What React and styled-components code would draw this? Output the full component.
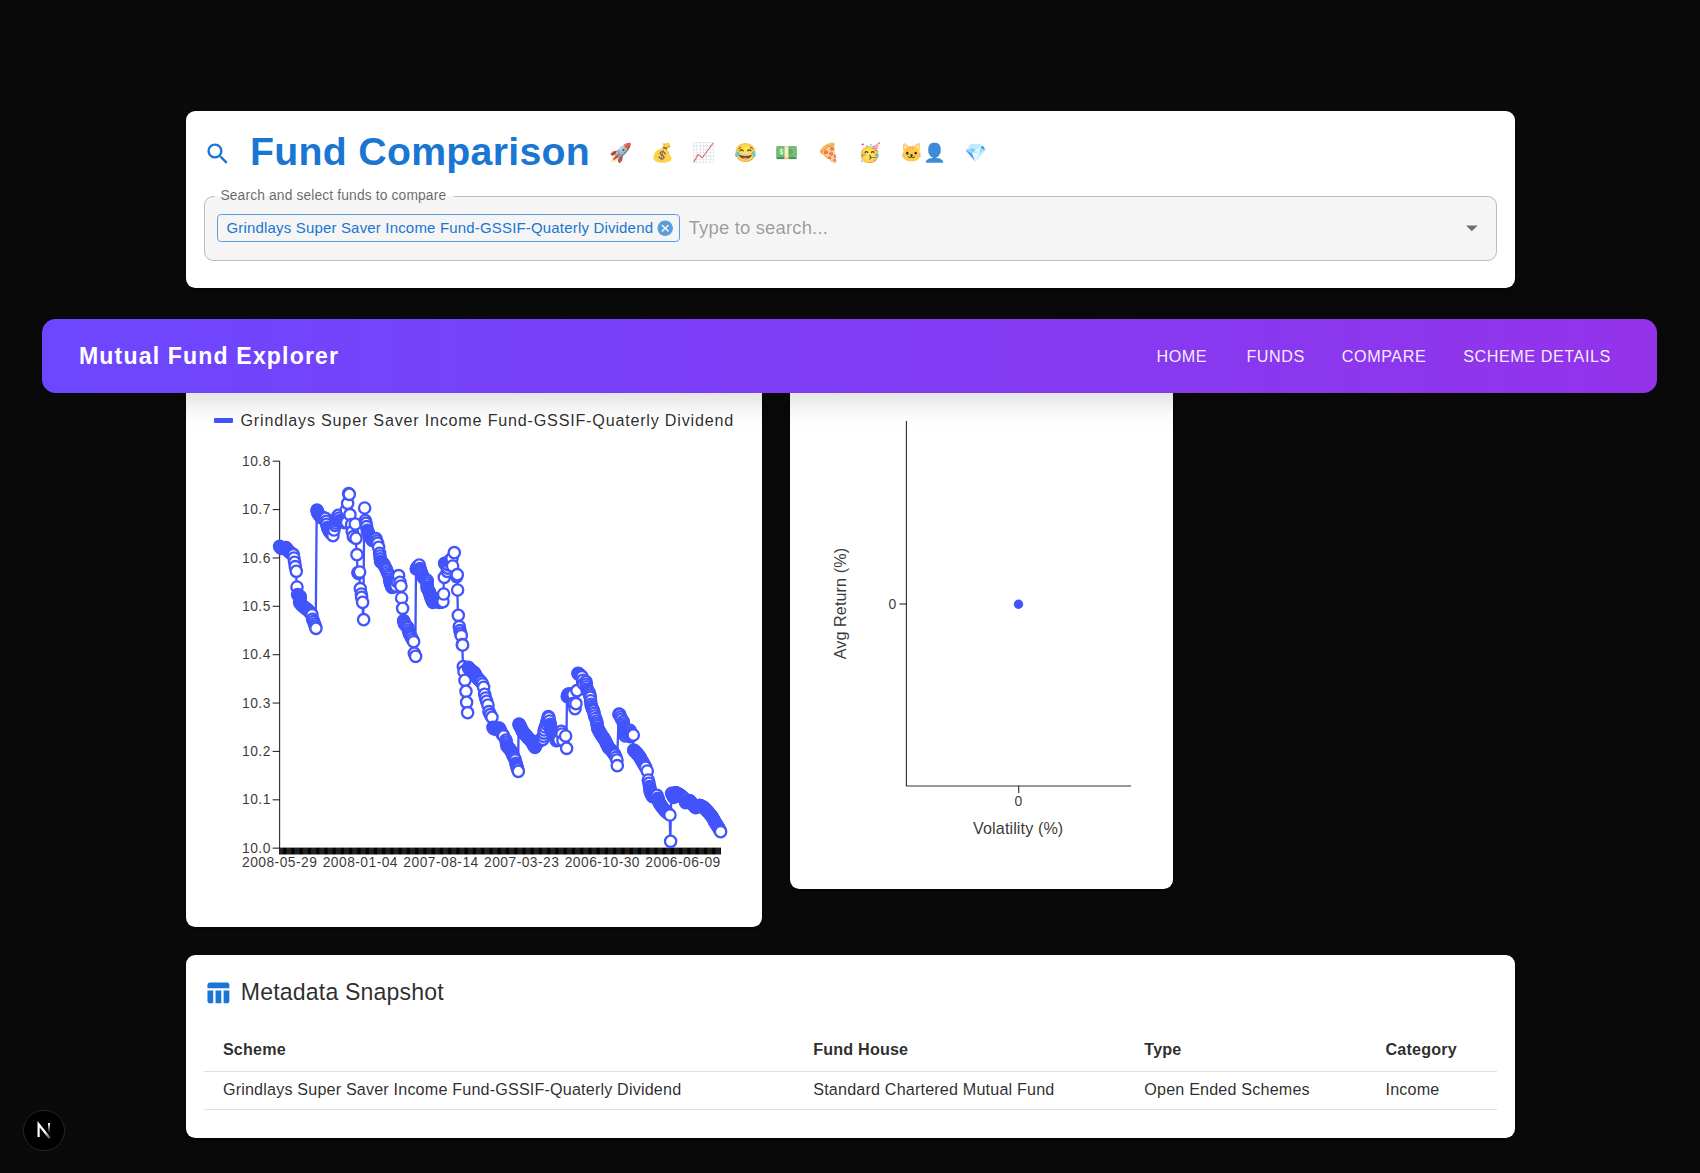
import React from "react";
import styled, { createGlobalStyle } from "styled-components";

const GlobalStyle = createGlobalStyle`
  *, *::before, *::after { box-sizing: border-box; }
  html { font-size: 18.466px; }
  body {
    margin: 0;
    background: #0a0a0a;
    color: rgba(0, 0, 0, 0.84);
    font-family: "Liberation Sans", Arial, Helvetica, sans-serif;
    overflow: hidden;
  }
`;

const Page = styled.div`
  position: relative;
  height: 1173px;
`;

const Content = styled.main`
  width: 1330px;
  margin: 0 auto;
  padding: 6rem 0 0 1px;
`;

const Card = styled.section`
  background: #fff;
  border-radius: 0.5rem;
  box-shadow: 0 2px 5px rgba(0, 0, 0, 0.6);
`;

const PaddedCard = styled(Card)`
  padding: 1rem 1rem 1.5rem;
`;

const TitleRow = styled.div`
  display: flex;
  align-items: center;
  gap: ${(p) => p.$gap};
  margin-bottom: 1rem;
`;

const Icon = styled.svg`
  flex: none;
  width: ${(p) => p.$size || "1.5rem"};
  height: ${(p) => p.$size || "1.5rem"};
  fill: ${(p) => p.$color || "#1976d2"};
`;

const PageTitle = styled.h1`
  margin: 0;
  padding-bottom: 3px;
  font-size: 2.125rem;
  line-height: calc(2.624rem - 3px);
  font-weight: 700;
  letter-spacing: 0.00735em;
  color: #1976d2;
`;

const SectionTitle = styled.h2`
  margin: 0;
  font-size: 1.25rem;
  line-height: 1.6;
  font-weight: 400;
  letter-spacing: 0.0075em;
`;

const EmojiStrip = styled.div`
  display: flex;
  gap: 1rem;
  padding: 0 0 1px 1.5px;
  font-size: 1rem;
  line-height: 1.5;
`;

const Field = styled.div`
  position: relative;
  display: flex;
  align-items: center;
  height: 3.5rem;
  padding: 0 0.5625rem 1px 0.7rem;
  border-radius: 0.5rem;
  background: #f5f5f5;
`;

const FieldOutline = styled.fieldset`
  position: absolute;
  inset: -5px 0 0;
  margin: 0;
  padding: 0 0.5rem;
  border: 1px solid rgba(0, 0, 0, 0.23);
  border-radius: 0.5rem;
  pointer-events: none;

  legend {
    height: 11px;
    padding: 0 0.4rem 0 0.3125rem;
    font-size: 0.75rem;
    letter-spacing: 0.00938em;
    line-height: 8px;
    color: rgba(0, 0, 0, 0.6);
    white-space: nowrap;
  }
`;

const Chip = styled.span`
  display: flex;
  align-items: center;
  height: 1.5rem;
  padding: 0 0.25rem 0 0.4375rem;
  gap: 0.17rem;
  border: 1px solid rgba(25, 118, 210, 0.7);
  border-radius: 0.25rem;
  color: #1976d2;
  font-size: 0.8125rem;
  letter-spacing: 0.01154em;
  white-space: nowrap;
`;

const Placeholder = styled.span`
  flex: 1;
  margin-left: 0.45rem;
  font-size: 1rem;
  letter-spacing: 0.00938em;
  color: rgba(0, 0, 0, 0.38);
`;

const NavBar = styled.nav`
  position: absolute;
  top: 319.3px;
  left: 42px;
  right: 43px;
  height: 74px;
  display: flex;
  align-items: center;
  justify-content: space-between;
  padding: 0 2rem;
  border-radius: 0.75rem;
  background: linear-gradient(90deg, #6c47ff, #9333ea);
  box-shadow: 0 4px 32px rgba(0, 0, 0, 0.18);
  color: #fff;
`;

const Brand = styled.span`
  font-size: 1.25rem;
  font-weight: 700;
  letter-spacing: 0.0625rem;
`;

const NavLinks = styled.div`
  display: flex;
  gap: 1rem;
`;

const NavLink = styled.a`
  min-width: 4rem;
  padding: 0.375rem 0.5rem;
  text-align: center;
  text-transform: uppercase;
  font-size: 0.875rem;
  letter-spacing: 0.03125rem;
  line-height: 1.75;
  color: rgba(255, 255, 255, 0.93);
`;

const ChartRow = styled.div`
  display: flex;
  align-items: flex-start;
  gap: 28px;
  margin: 46px 0 28px;
`;

const ChartCard = styled(Card)`
  width: ${(p) => p.$width}px;
  height: ${(p) => p.$height}px;
`;

const Legend = styled.div`
  display: flex;
  align-items: center;
  gap: 8px;
  height: 96px;
  padding: 76px 0 0 27.5px;
  font-size: 0.875rem;
  letter-spacing: 0.0427rem;
  white-space: nowrap;
`;

const LegendMark = styled.span`
  width: 19px;
  height: 4.6px;
  border-radius: 1px;
  background: #4254fb;
`;

const Plot = styled.svg`
  display: block;

  text {
    fill: rgba(0, 0, 0, 0.8);
    font-size: 13.85px;
    letter-spacing: 0.46px;
  }
  .label {
    font-size: 16.16px;
    letter-spacing: 0.1px;
  }
  line, .axis {
    stroke: rgba(0, 0, 0, 0.8);
    stroke-width: 1.15;
    fill: none;
  }
`;

const Table = styled.table`
  width: 100%;
  border-collapse: collapse;
  table-layout: fixed;
  font-size: 0.875rem;
  letter-spacing: 0.01071em;
  text-align: left;

  th, td {
    padding: 0.3rem 1rem 0.42rem;
    border-bottom: 1px solid #e0e0e0;
    white-space: nowrap;
  }
  th {
    height: 2.3125rem;
    font-weight: 700;
  }
  td {
    height: 2.05rem;
  }
`;

const DevBadge = styled.div`
  position: absolute;
  left: 23px;
  top: 1109.5px;
  width: 41.5px;
  height: 41.5px;
  border-radius: 50%;
  border: 1.5px solid #262626;
  background: #000;
  display: grid;
  place-items: center;
`;

/* Each run is traced in thirds of a pixel from its own origin: [x, y, points filled in on the way]. */
const RUNS = [
  {
    origin: [265, 450],
    points: [
      [43, 289, 0], [48, 295, 2], [62, 293, 5], [72, 306, 3], [84, 314, 4], [86, 324, 0], [88, 337, 0], [90, 350, 0], [93, 364, 0],
      [95, 411, 0], [97, 434, 0], [105, 440, 2], [103, 458, 2], [112, 468, 3], [128, 480, 5], [140, 494, 4], [142, 508, 0], [148, 522, 1], [152, 535, 1],
      [155, 180, 0], [158, 190, 2], [168, 203, 3], [180, 205, 3], [183, 214, 0], [184, 223, 0], [187, 232, 0], [192, 244, 3], [203, 257, 2],
      [206, 240, 0], [209, 226, 0], [212, 212, 1], [219, 196, 2], [224, 212, 1], [238, 218, 3], [243, 180, 0], [247, 160, 0], [250, 131, 0], [252, 133, 0],
      [244, 217, 0], [254, 194, 0], [259, 224, 0], [261, 245, 0], [264, 260, 0], [270, 222, 0], [272, 265, 0], [275, 314, 0],
      [278, 368, 0], [279, 370, 0], [283, 366, 0], [285, 416, 0], [288, 432, 0], [289, 442, 0], [292, 457, 0], [295, 509, 0],
      [298, 174, 0], [300, 212, 0], [302, 220, 0], [304, 230, 0], [306, 241, 0], [312, 256, 3], [322, 272, 4], [332, 266, 4], [337, 280, 1], [340, 292, 0], [343, 310, 0],
      [346, 335, 2], [355, 342, 3], [364, 360, 3], [372, 380, 2], [374, 395, 1], [380, 412, 3], [392, 408, 3], [396, 395, 0], [400, 377, 0],
      [404, 397, 0], [407, 408, 0], [409, 444, 0], [412, 475, 0], [415, 512, 0], [418, 522, 2], [428, 533, 2], [431, 548, 1], [438, 562, 2], [445, 575, 1],
      [447, 610, 0], [451, 619, 0], [453, 357, 0], [456, 352, 2], [462, 345, 2], [464, 356, 0], [468, 368, 1], [475, 384, 2], [486, 392, 2], [485, 412, 2],
      [493, 428, 3], [496, 440, 2], [503, 457, 3], [511, 445, 2], [522, 457, 3], [533, 455, 2], [535, 432, 0], [537, 382, 0], [538, 340, 0], [543, 344, 2],
      [546, 364, 0], [551, 335, 2], [560, 325, 2], [567, 308, 0], [562, 348, 0], [574, 380, 0], [576, 374, 0], [577, 420, 0], [579, 496, 0],
      [582, 530, 0], [584, 542, 0], [586, 550, 0], [588, 557, 0], [591, 584, 0], [592, 585, 0],
    ],
  },
  {
    origin: [400, 530],
    points: [
      [189, 410, 0], [191, 425, 0], [194, 451, 0], [197, 484, 0], [199, 517, 0], [202, 548, 0],
      [204, 412, 0], [210, 420, 3], [222, 428, 4], [230, 443, 4], [243, 456, 3], [247, 462, 0], [250, 472, 0], [253, 493, 0], [256, 504, 0], [259, 514, 0], [263, 525, 0],
      [266, 545, 0], [270, 554, 0], [275, 562, 0], [278, 592, 0], [283, 597, 3], [297, 594, 4], [303, 608, 3], [310, 618, 2], [317, 630, 0],
      [320, 648, 2], [332, 662, 4], [340, 680, 3], [345, 690, 1], [347, 700, 0], [352, 717, 3], [354, 724, 0],
      [356, 582, 0], [360, 590, 3], [368, 606, 4], [382, 622, 5], [394, 635, 4], [404, 652, 3], [412, 634, 3], [428, 628, 3], [432, 600, 2], [438, 582, 1], [444, 560, 2],
      [446, 563, 0], [448, 573, 0], [450, 583, 0], [452, 600, 3], [464, 618, 4], [468, 632, 2], [476, 630, 2], [483, 604, 0], [485, 612, 0], [488, 632, 0], [496, 618, 0], [499, 655, 0],
      [501, 500, 0], [504, 492, 3], [518, 494, 3], [520, 520, 0], [524, 536, 0], [527, 521, 0],
    ],
  },
  {
    origin: [560, 640],
    points: [
      [50, 152, 0], [53, 100, 0], [57, 103, 3], [65, 110, 2], [70, 132, 1], [77, 125, 0], [80, 148, 2], [87, 160, 3], [90, 172, 1],
      [92, 193, 1], [96, 206, 1], [100, 213, 1], [103, 228, 1], [109, 243, 1], [112, 264, 2], [122, 283, 5], [134, 300, 5], [144, 322, 4], [156, 334, 4], [164, 345, 3], [170, 360, 1], [171, 377, 0],
      [176, 222, 0], [178, 224, 1], [184, 238, 1], [189, 245, 0], [191, 260, 1], [195, 288, 4], [203, 272, 2], [209, 271, 1], [210, 290, 2], [219, 285, 1],
      [220, 330, 0], [228, 338, 4], [238, 350, 5], [248, 368, 4], [256, 382, 2], [261, 393, 0], [264, 420, 0], [266, 430, 0], [268, 440, 0], [270, 455, 2], [277, 470, 3],
      [290, 466, 3], [293, 475, 0], [296, 487, 2], [306, 502, 4], [318, 516, 4], [329, 525, 2], [331, 604, 0],
      [334, 460, 0], [340, 472, 1], [346, 458, 4], [360, 465, 5], [374, 478, 4], [376, 488, 1], [388, 482, 3], [396, 492, 3], [406, 503, 3], [418, 496, 4],
      [430, 502, 4], [442, 514, 4], [455, 530, 4], [466, 549, 5], [474, 562, 3], [481, 575, 2],
    ],
  },
];

function expand(runs) {
  const out = [];
  runs.forEach(({ origin, points }) => {
    points.forEach(([px, py, fill]) => {
      const x = origin[0] + px / 3;
      const y = origin[1] + py / 3;
      const prev = out[out.length - 1];
      for (let i = 1; prev && i <= fill; i += 1) {
        const t = i / (fill + 1);
        out.push([prev[0] + (x - prev[0]) * t, prev[1] + (y - prev[1]) * t]);
      }
      out.push([x, y]);
    });
  });
  return out;
}

const NAV_POINTS = expand(RUNS);
const Y_TICKS = ["10.8", "10.7", "10.6", "10.5", "10.4", "10.3", "10.2", "10.1", "10.0"];
const X_TICKS = ["2008-05-29", "2008-01-04", "2007-08-14", "2007-03-23", "2006-10-30", "2006-06-09"];

function NavHistoryPlot() {
  return (
    <Plot width="575.6" height="497" viewBox="186 430 575.6 497">
      <defs>
        <pattern id="ticks" x="279" y="0" width="8.25" height="10" patternUnits="userSpaceOnUse">
          <rect width="8.25" height="10" fill="#222" />
          <rect x="4" width="3.4" height="10" fill="#020202" />
        </pattern>
      </defs>
      <path className="axis" d="M279.6 461V848" />
      {Y_TICKS.map((label, i) => (
        <g key={label}>
          <line x1="272.6" x2="279.6" y1={461.2 + i * 48.37} y2={461.2 + i * 48.37} />
          <text x="270.8" y={465.8 + i * 48.37} textAnchor="end">{label}</text>
        </g>
      ))}
      <rect x="279" y="847.6" width="442" height="6.9" fill="url(#ticks)" />
      {X_TICKS.map((label, i) => (
        <text key={label} x={279.7 + i * 80.67} y="867.4" textAnchor="middle">{label}</text>
      ))}
      <polyline
        points={NAV_POINTS.map((p) => `${p[0].toFixed(1)},${p[1].toFixed(1)}`).join(" ")}
        fill="none" stroke="#4254fb" strokeWidth="2.3" strokeLinejoin="round"
      />
      {NAV_POINTS.map(([x, y], i) => (
        <circle key={i} cx={x + 0.3} cy={y} r="5.65" fill="#fff" stroke="#4254fb" strokeWidth="2.3" />
      ))}
    </Plot>
  );
}

function RiskPlot() {
  return (
    <Plot width="383" height="555" viewBox="790 334 383 555">
      <path className="axis" d="M906.4 421V786H1131" />
      <line x1="899.4" x2="906.4" y1="604" y2="604" />
      <line x1="1018.7" x2="1018.7" y1="786" y2="793" />
      <text x="896.6" y="608.8" textAnchor="end">0</text>
      <text x="1018.6" y="805.6" textAnchor="middle">0</text>
      <circle cx="1018.5" cy="604.2" r="4.7" fill="#4254fb" />
      <text className="label" x="1018.2" y="834.4" textAnchor="middle">Volatility (%)</text>
      <text className="label" transform="translate(846 603.6) rotate(-90)" textAnchor="middle">Avg Return (%)</text>
    </Plot>
  );
}

const EMOJI = ["🚀", "💰", "📈", "😂", "💵", "🍕", "🥳", "🐱‍👤", "💎"];
const COLUMNS = [
  { title: "Scheme", width: "45.69%" },
  { title: "Fund House", width: "25.62%" },
  { title: "Type", width: "18.67%" },
  { title: "Category", width: "10.02%" },
];
const ROWS = [["Grindlays Super Saver Income Fund-GSSIF-Quaterly Dividend", "Standard Chartered Mutual Fund", "Open Ended Schemes", "Income"]];

export default function App() {
  return (
    <Page>
      <GlobalStyle />
      <Content>
        <PaddedCard>
          <TitleRow $gap="0.97rem">
            <Icon viewBox="0 0 24 24">
              <path d="M15.5 14h-.79l-.28-.27C15.41 12.59 16 11.11 16 9.5 16 5.91 13.09 3 9.5 3S3 5.91 3 9.5 5.91 16 9.5 16c1.61 0 3.09-.59 4.23-1.57l.27.28v.79l5 4.99L20.49 19l-4.99-5zm-6 0C7.01 14 5 11.99 5 9.5S7.01 5 9.5 5 14 7.01 14 9.5 11.99 14 9.5 14z" />
            </Icon>
            <PageTitle>Fund Comparison</PageTitle>
            <EmojiStrip>
              {EMOJI.map((e) => <span key={e}>{e}</span>)}
            </EmojiStrip>
          </TitleRow>
          <Field>
            <Chip>
              {ROWS[0][0]}
              <Icon viewBox="0 0 24 24" $size="1rem" $color="rgba(25, 118, 210, 0.7)">
                <path d="M12 2C6.47 2 2 6.47 2 12s4.47 10 10 10 10-4.47 10-10S17.53 2 12 2zm5 13.59L15.59 17 12 13.41 8.41 17 7 15.59 10.59 12 7 8.41 8.41 7 12 10.59 15.59 7 17 8.41 13.41 12 17 15.59z" />
              </Icon>
            </Chip>
            <Placeholder>Type to search...</Placeholder>
            <Icon viewBox="0 0 24 24" $color="rgba(0, 0, 0, 0.54)">
              <path d="M7 10l5 5 5-5z" />
            </Icon>
            <FieldOutline>
              <legend>Search and select funds to compare</legend>
            </FieldOutline>
          </Field>
        </PaddedCard>

        <ChartRow>
          <ChartCard $width={575.6} $height={593}>
            <Legend>
              <LegendMark />
              {ROWS[0][0]}
            </Legend>
            <NavHistoryPlot />
          </ChartCard>
          <ChartCard $width={383} $height={555}>
            <RiskPlot />
          </ChartCard>
        </ChartRow>

        <PaddedCard>
          <TitleRow $gap="0.47rem">
            <Icon viewBox="0 0 24 24">
              <path d="M10 10.02h5V21h-5zM17 21h3c1.1 0 2-.9 2-2v-9h-5zm3-18H5c-1.1 0-2 .9-2 2v3h19V5c0-1.1-.9-2-2-2zM3 19c0 1.1.9 2 2 2h3V10H3z" />
            </Icon>
            <SectionTitle>Metadata Snapshot</SectionTitle>
          </TitleRow>
          <Table>
            <colgroup>
              {COLUMNS.map((c) => <col key={c.title} width={c.width} />)}
            </colgroup>
            <thead>
              <tr>{COLUMNS.map((c) => <th key={c.title}>{c.title}</th>)}</tr>
            </thead>
            <tbody>
              {ROWS.map((r) => (
                <tr key={r[0]}>{r.map((cell) => <td key={cell}>{cell}</td>)}</tr>
              ))}
            </tbody>
          </Table>
        </PaddedCard>
      </Content>

      <NavBar>
        <Brand>Mutual Fund Explorer</Brand>
        <NavLinks>
          <NavLink>Home</NavLink>
          <NavLink>Funds</NavLink>
          <NavLink>Compare</NavLink>
          <NavLink>Scheme Details</NavLink>
        </NavLinks>
      </NavBar>

      <DevBadge>
        <svg width="16" height="18" viewBox="0 0 16 18" fill="none">
          <defs>
            <linearGradient id="fade" x1="0" y1="2" x2="0" y2="12" gradientUnits="userSpaceOnUse">
              <stop offset="0" stopColor="#fff" />
              <stop offset="1" stopColor="#fff" stopOpacity="0" />
            </linearGradient>
            <linearGradient id="tail" x1="9" y1="11" x2="14" y2="17" gradientUnits="userSpaceOnUse">
              <stop offset="0" stopColor="#fff" />
              <stop offset="1" stopColor="#fff" stopOpacity="0.3" />
            </linearGradient>
          </defs>
          <path d="M2.6 16V3.2L13.8 17.2" stroke="url(#tail)" strokeWidth="2.2" />
          <rect x="12" y="2" width="2" height="10" fill="url(#fade)" />
        </svg>
      </DevBadge>
    </Page>
  );
}
